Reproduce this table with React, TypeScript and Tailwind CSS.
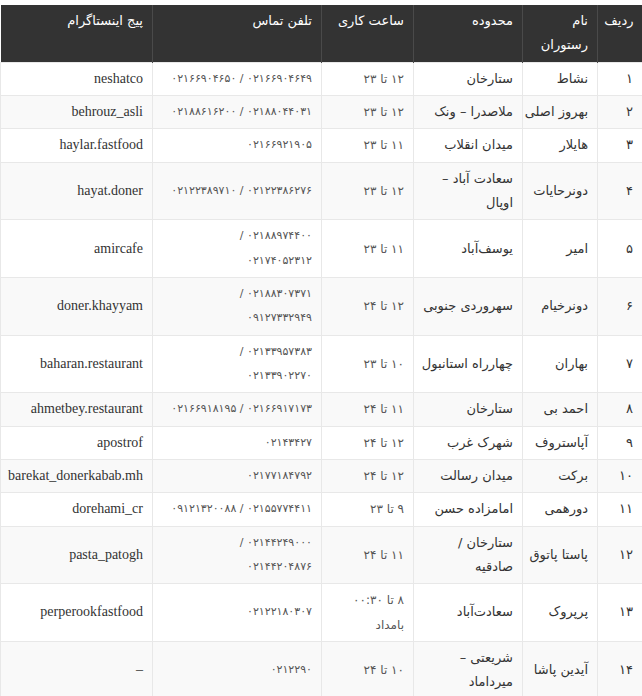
type Row = {
  id: string
  name: string[]
  area: string[]
  hours: string[]
  phone: string[]
  insta: string
}

const rows: Row[] = [
  { id: "۱", name: ["نشاط"], area: ["ستارخان"], hours: ["۱۲ تا ۲۳"], phone: ["۰۲۱۶۶۹۰۴۶۴۹ / ۰۲۱۶۶۹۰۴۶۵۰"], insta: "neshatco" },
  { id: "۲", name: ["بهروز اصلی"], area: ["ملاصدرا – ونک"], hours: ["۱۲ تا ۲۳"], phone: ["۰۲۱۸۸۰۴۴۰۳۱ / ۰۲۱۸۸۶۱۶۲۰۰"], insta: "behrouz_asli" },
  { id: "۳", name: ["هایلار"], area: ["میدان انقلاب"], hours: ["۱۱ تا ۲۳"], phone: ["۰۲۱۶۶۹۲۱۹۰۵"], insta: "haylar.fastfood" },
  { id: "۴", name: ["دونرحایات"], area: ["سعادت آباد –", "اوپال"], hours: ["۱۲ تا ۲۳"], phone: ["۰۲۱۲۲۳۸۶۲۷۶ / ۰۲۱۲۲۳۸۹۷۱۰"], insta: "hayat.doner" },
  { id: "۵", name: ["امیر"], area: ["یوسف‌آباد"], hours: ["۱۱ تا ۲۳"], phone: ["۰۲۱۸۸۹۷۴۴۰۰ /", "۰۲۱۷۴۰۵۲۳۱۲"], insta: "amircafe" },
  { id: "۶", name: ["دونرخیام"], area: ["سهروردی جنوبی"], hours: ["۱۲ تا ۲۴"], phone: ["۰۲۱۸۸۳۰۷۳۷۱ /", "۰۹۱۲۷۳۳۲۹۴۹"], insta: "doner.khayyam" },
  { id: "۷", name: ["بهاران"], area: ["چهارراه استانبول"], hours: ["۱۰ تا ۲۳"], phone: ["۰۲۱۳۳۹۵۷۳۸۳ /", "۰۲۱۳۳۹۰۲۲۷۰"], insta: "baharan.restaurant" },
  { id: "۸", name: ["احمد بی"], area: ["ستارخان"], hours: ["۱۱ تا ۲۴"], phone: ["۰۲۱۶۶۹۱۷۱۷۳ / ۰۲۱۶۶۹۱۸۱۹۵"], insta: "ahmetbey.restaurant" },
  { id: "۹", name: ["آپاستروف"], area: ["شهرک غرب"], hours: ["۱۲ تا ۲۴"], phone: ["۰۲۱۴۳۴۲۷"], insta: "apostrof" },
  { id: "۱۰", name: ["برکت"], area: ["میدان رسالت"], hours: ["۱۲ تا ۲۴"], phone: ["۰۲۱۷۷۱۸۴۷۹۲"], insta: "barekat_donerkabab.mh" },
  { id: "۱۱", name: ["دورهمی"], area: ["امامزاده حسن"], hours: ["۹ تا ۲۳"], phone: ["۰۲۱۵۵۷۷۴۴۱۱ / ۰۹۱۲۱۳۲۰۰۸۸"], insta: "dorehami_cr" },
  { id: "۱۲", name: ["پاستا پاتوق"], area: ["ستارخان /", "صادقیه"], hours: ["۱۱ تا ۲۴"], phone: ["۰۲۱۴۴۲۴۹۰۰۰ /", "۰۲۱۴۴۲۰۴۸۷۶"], insta: "pasta_patogh" },
  { id: "۱۳", name: ["پرپروک"], area: ["سعادت‌آباد"], hours: ["۸ تا ۰۰:۳۰", "بامداد"], phone: ["۰۲۱۲۲۱۸۰۳۰۷"], insta: "perperookfastfood" },
  { id: "۱۴", name: ["آیدین پاشا"], area: ["شریعتی –", "میرداماد"], hours: ["۱۰ تا ۲۴"], phone: ["۰۲۱۲۲۹۰"], insta: "–" },
]

const Lines = ({ lines }: { lines: string[] }) => (
  <>
    {lines.map((l, i) => (
      <div key={i} className="whitespace-nowrap">
        {l}
      </div>
    ))}
  </>
)

const App = () => {
  return (
    <div className="bg-white pt-[5px]">
      <table dir="rtl" className="w-[642px] table-fixed border-collapse text-[#333]">
        <colgroup>
          <col className="w-[45px]" />
          <col className="w-[75px]" />
          <col className="w-[109px]" />
          <col className="w-[92px]" />
          <col className="w-[169px]" />
          <col className="w-[152px]" />
        </colgroup>
        <thead>
          <tr className="bg-[#333333] text-[13px] leading-[24.2px] text-white [font-family:'DejaVu_Sans',sans-serif]">
            <th className="border-l border-[#4a4a4a] px-[9px] py-[4.1px] text-right align-top font-normal">ردیف</th>
            <th className="border-l border-[#4a4a4a] px-[9px] py-[4.1px] text-right align-top font-normal">
              <Lines lines={["نام", "رستوران"]} />
            </th>
            <th className="border-l border-[#4a4a4a] px-[9px] py-[4.1px] text-right align-top font-normal">محدوده</th>
            <th className="border-l border-[#4a4a4a] px-[9px] py-[4.1px] text-right align-top font-normal">ساعت کاری</th>
            <th className="border-l border-[#4a4a4a] px-[9px] py-[4.1px] text-right align-top font-normal">تلفن تماس</th>
            <th className="px-[9px] py-[4.1px] text-right align-top font-normal">پیج اینستاگرام</th>
          </tr>
        </thead>
        <tbody className="leading-[24.2px] [font-family:'DejaVu_Sans',sans-serif]">
          {rows.map((r, i) => (
            <tr key={r.id} className={i % 2 === 1 ? "bg-[#f9f9f9]" : "bg-white"}>
              <td className="border border-[#e8e8e8] px-[9px] py-[4.1px] align-middle text-[13px]">{r.id}</td>
              <td className="border border-[#e8e8e8] px-[9px] py-[4.1px] align-middle text-[13px]">
                <Lines lines={r.name} />
              </td>
              <td className="border border-[#e8e8e8] px-[9px] py-[4.1px] align-middle text-[13px]">
                <Lines lines={r.area} />
              </td>
              <td className="border border-[#e8e8e8] px-[9px] py-[4.1px] align-middle text-[12px] text-[#555]">
                <Lines lines={r.hours} />
              </td>
              <td className="border border-[#e8e8e8] px-[9px] py-[4.1px] align-middle text-[11px] text-[#555]">
                <Lines lines={r.phone} />
              </td>
              <td className="border border-[#e8e8e8] px-[9px] py-[4.1px] align-middle text-[14px] [font-family:'Liberation_Serif',serif]">
                {r.insta}
              </td>
            </tr>
          ))}
        </tbody>
      </table>
    </div>
  )
}

export default App
